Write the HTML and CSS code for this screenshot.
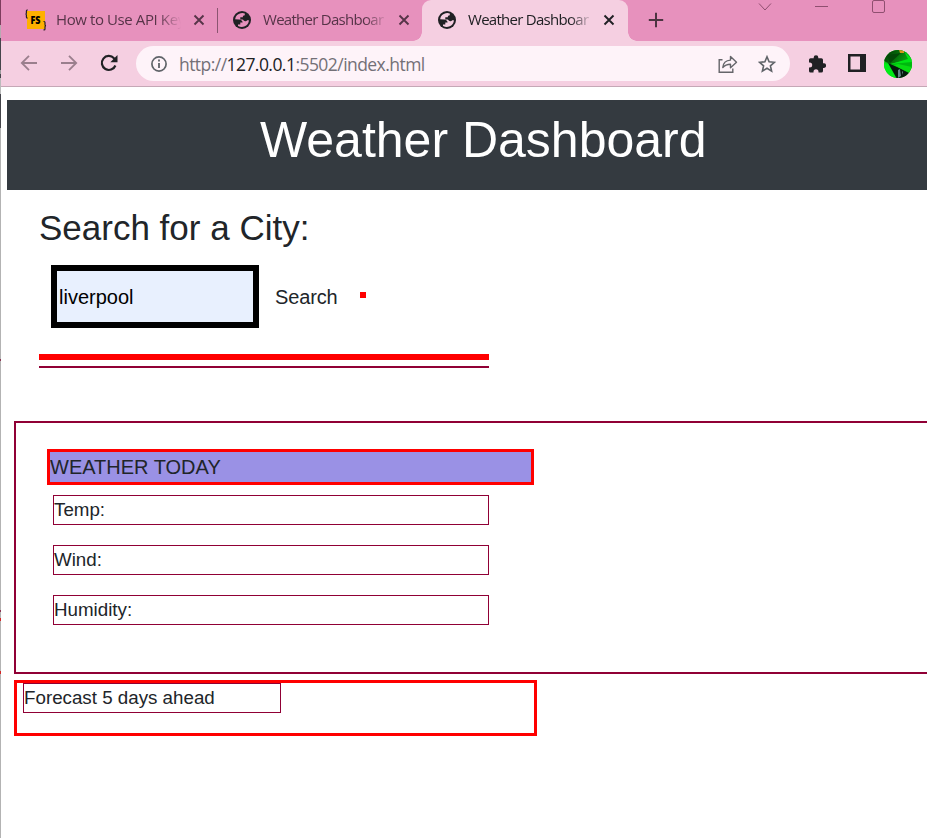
FILE: index.html
```html
<!DOCTYPE html>
<html lang="en">
<head>
<meta charset="utf-8">
<title>Weather Dashboard</title>
<link rel="stylesheet" href="styles.css">
</head>
<body>
<svg class="defs" width="0" height="0" aria-hidden="true">
  <symbol id="globe" viewBox="0 0 18 18">
    <circle cx="9" cy="9" r="9" fill="#202124"/>
    <path fill="var(--land)" d="M9.600 2C7 2 4.300 3.200 2.800 5.700L2.100 8.200l4 .2c2.200.1 3.300 1.200 3.500 3.200H7.300v2H5v1.300c2.600 1.600 5.800 1.400 8.200-.3 1.600-1.200 2.700-3.200 2.700-5.300h-1.700c-.6.900-1.500 1.200-2.600.8-1-.3-1.100-1.400-2.100-1.700H7.300V6.300h2.500c0-1.300.5-1.800 2-2V2.500z"/>
  </symbol>
  <symbol id="close" viewBox="0 0 12 12"><path d="M1.500 1.500l9 9M10.500 1.500l-9 9" stroke="currentColor" stroke-width="1.900"/></symbol>
</svg>
<div class="edge"></div>
<div class="window">
  <div class="tabstrip">
    <div class="tab">
      <svg class="favicon fs" width="22" height="22" viewBox="0 0 22 22"><rect x="2" y="2" width="18" height="18" fill="#ffb000"/><text x="5.400" y="14.500" font-family="Open Sans" font-weight="800" font-size="10" textLength="10" lengthAdjust="spacingAndGlyphs">FS</text><path d="M2.800 1H2Q1.400 1 1.400 2v2Q1.400 5 .5 5q.9 0 .9 1v2q0 1 .6 1h.8M18.500 12.500h.6q.9 0 .9 1v2q0 1 .9 1.200-.9.200-.9 1.200v2q0 1-.9 1h-.6" fill="none" stroke="#2c2025" stroke-width="1.200"/></svg>
      <span class="tab-title">How to Use API Key</span>
      <svg class="x" width="12" height="12"><use href="#close"/></svg>
    </div>
    <div class="tab second">
      <svg class="favicon" width="18" height="18"><use href="#globe"/></svg>
      <span class="tab-title">Weather Dashboar</span>
      <svg class="x" width="12" height="12"><use href="#close"/></svg>
    </div>
    <div class="tab active">
      <svg class="favicon" width="18" height="18"><use href="#globe"/></svg>
      <span class="tab-title">Weather Dashboar</span>
      <svg class="x" width="12" height="12"><use href="#close"/></svg>
    </div>
    <svg class="plus" width="16" height="16" viewBox="0 0 16 16"><path d="M8 .8v14.400M.8 8h14.400" stroke="#4d3441" stroke-width="2"/></svg>
    <svg class="controls" width="130" height="14" viewBox="0 0 130 14"><g fill="none" stroke="#8f4f70"><path d="M1 3.500l6 6.500 6-6.500M57 6.500h13"/><rect x="114.500" y=".5" width="12" height="12" rx="1.500"/></g></svg>
  </div>
  <div class="toolbar">
    <svg class="arrow" width="18" height="16" viewBox="0 0 18 16"><path d="M17 8H2M9 .8 1.800 8 9 15.200" fill="none" stroke="#9a7f8d" stroke-width="1.800"/></svg>
    <svg class="arrow forward" width="18" height="16" viewBox="0 0 18 16"><path d="M1 8h15M9 .8 16.200 8 9 15.200" fill="none" stroke="#9a7f8d" stroke-width="1.800"/></svg>
    <svg class="reload" width="18" height="18" viewBox="0 0 18 18"><path d="M15.400 11.500A7 7 0 1 1 14 4.200l1.500 1.500" fill="none" stroke="#202124" stroke-width="2.200"/><path d="M17.500 1v7.200h-7.200z" fill="#202124"/></svg>
    <div class="omnibox">
      <svg class="info" width="16" height="16" viewBox="0 0 16 16"><circle cx="8" cy="8" r="7.100" fill="none" stroke="#5f6368" stroke-width="1.700"/><path d="M8 3.600v1.900M8 7v5" stroke="#5f6368" stroke-width="1.800"/></svg>
      <span class="url">http://<b>127.0.0.1</b>:5502/index.html</span>
      <svg class="share" width="20" height="18" viewBox="0 0 20 18"><g fill="none" stroke="#65656a" stroke-width="1.400"><path d="M4.500 4.700H1.200v12.500h13.600v-3.700"/><path d="M4.800 12.500c.4-4.800 3.300-7.200 7.700-7.400V1.400l6 5.800-6 5.600V9.200c-3.500 0-5.800 1-7.700 3.300z" stroke-linejoin="round"/></g></svg>
      <svg class="star" width="18" height="18" viewBox="0 0 18 18"><path d="M9 1.800l2.100 5 5.300.5-4 3.500 1.200 5.300L9 13.300l-4.600 2.800 1.200-5.300-4-3.500 5.300-.5z" fill="none" stroke="#5f6368" stroke-width="1.600"/></svg>
    </div>
    <svg class="puzzle" width="18" height="18" viewBox="0 0 18 18"><path fill="#202124" d="M15.800 8.300H15V4.800Q15 3.200 13.400 3.200H10.300V2.500A2.300 2.300 0 0 0 5.700 2.500V3.200H2.600Q1 3.200 1 4.800V7.600H1.700A2.500 2.500 0 0 1 1.700 12.600H1V16Q1 17.500 2.600 17.500H5.500V16.800A2.500 2.500 0 0 1 10.500 16.800V17.500H13.400Q15 17.500 15 16V12.900H15.800A2.300 2.300 0 0 0 15.800 8.300z"/></svg>
    <svg class="panel" width="18" height="18" viewBox="0 0 18 18"><path fill="#202124" fill-rule="evenodd" d="M0 0h18v18H0zM2.500 2.500v13H12v-13z"/></svg>
    <svg class="avatar" width="28" height="28" viewBox="0 0 28 28"><defs><clipPath id="round"><circle cx="14" cy="14" r="14"/></clipPath><linearGradient id="leaf" x1="0" y1="0" x2="1" y2=".4"><stop offset="0" stop-color="#022d04"/><stop offset="1" stop-color="#08a80f"/></linearGradient></defs><g clip-path="url(#round)"><path fill="#08c512" d="M0 0h28v28H0z"/><path fill="url(#leaf)" d="M0 0h24L28 9 6 14 0 11z"/><path fill="#034807" d="M3 5 17 3 6 13z"/><path fill="#00e516" d="M20 1l8 8v6L7 14 24 9z"/><path fill="#00b70f" d="M6 14 28 12v8z"/><path fill="#00ed16" d="M0 13l5 1 10 14H0z"/><path fill="#041b0c" d="M4 13l9 4 12 6-5 6h-7z"/><path fill="#09db12" d="M10 15l16 8 2-6-14-3z"/><path fill="#66878a" d="m14 20 2-1 1 7-3 2zM18 22l1-1v4z"/><path fill="#d49618" d="M15 0h5v3h-4z"/></g></svg>
  </div>
  <main class="page">
    <h1 class="banner">Weather Dashboard</h1>
    <section class="search">
      <h2>Search for a City:</h2>
      <div class="search-row">
        <input type="text" value="liverpool" aria-label="City">
        <span class="search-button">Search</span>
        <span class="marker"></span>
      </div>
      <div class="rule-red"></div>
      <div class="rule-wine"></div>
    </section>
    <section class="today">
      <div class="today-title">WEATHER TODAY</div>
      <div class="reading">Temp:</div>
      <div class="reading">Wind:</div>
      <div class="reading">Humidity:</div>
    </section>
    <section class="forecast"><div class="forecast-title">Forecast 5 days ahead</div></section>
  </main>
</div>
</body>
</html>
```
FILE: styles.css
```css
* { box-sizing: border-box; }
body {
  margin: 0;
  height: 838px;
  display: grid;
  grid-template-columns: 1px 1fr;
  overflow: hidden;
  background: #fff;
  color: #212529;
  font-family: "Liberation Sans", Arial, sans-serif;
}
.defs { position: absolute; }
.edge {
  background: linear-gradient(#7d3c5d 0 25px, #b8a9b1 25px 38px, #45454b 38px 70px, #999 70px 74px, #45454b 74px 78px, #bbb 78px 94px, #45454b 94px 128px, #b3b3b3 128px 359px, #8b3552 359px 361px, #b3b3b3 361px 610px, #8b3552 610px 612px, #b3b3b3 612px 618px, #d32626 618px 621px, #b3b3b3 621px 671px, #d32626 671px 674px, #b3b3b3 674px);
}
.window { min-width: 0; overflow: hidden; }
svg { display: block; flex: none; }

.tabstrip {
  height: 41px;
  display: flex;
  background: #e791bd;
  font: 15px/20px "Open Sans", "Noto Sans", sans-serif;
  color: #573448;
}
.tab {
  width: 217px;
  height: 41px;
  display: flex;
  padding: 0 0 0 24px;
  --land: #e791bd;
}
.tab.second { width: 204px; padding-left: 15px; }
.tab.second::before {
  content: "";
  width: 1px;
  height: 25px;
  margin: 8px 0 0 -16px;
  background: #8b5571;
}
.tab.second .favicon { margin-left: 15px; }
.tab.active {
  width: 206px;
  padding-left: 16px;
  background: #f5cfe1;
  border-radius: 9px 9px 0 0;
  --land: #f5cfe1;
  color: #202124;
  position: relative;
}
.tab.active::before, .tab.active::after {
  content: "";
  position: absolute;
  bottom: 0;
  width: 9px;
  height: 9px;
}
.tab.active::before { left: -9px; background: radial-gradient(circle at 0 0, transparent 8.500px, #f5cfe1 9px); }
.tab.active::after { right: -9px; background: radial-gradient(circle at 100% 0, transparent 8.500px, #f5cfe1 9px); }
.favicon { margin-top: 11px; }
.fs { margin-top: 9px; }
.tab-title {
  width: 125px;
  height: 22px;
  margin: 9px 0 0 12px;
  white-space: nowrap;
  letter-spacing: -0.720px;
  -webkit-mask-image: linear-gradient(90deg, #000 102px, transparent 125px);
  mask-image: linear-gradient(90deg, #000 102px, transparent 125px);
}
.fs + .tab-title { margin-left: 9px; letter-spacing: -0.400px; }
.x { margin: 14px 0 0 10px; }
.fs ~ .x { margin-left: 12px; }
.plus { margin: 12px 0 0 20px; }
.controls { margin: 0 0 0 94px; }

.toolbar {
  height: 46px;
  display: flex;
  align-items: center;
  padding-left: 19px;
  background: #f5cfe1;
  border-bottom: 1px solid #c5a8b6;
}
.arrow { margin-top: -2px; }
.forward { margin-left: 22px; }
.reload { margin: -2px 0 0 22px; }
.omnibox {
  width: 654px;
  height: 35px;
  margin-left: 18px;
  padding-left: 15px;
  display: flex;
  align-items: center;
  border-radius: 18px;
  background: #fef3f9;
}
.url {
  width: 247px;
  margin-left: 12px;
  font: 17.500px/24px "Open Sans", "Noto Sans", sans-serif;
  letter-spacing: -0.550px;
  white-space: nowrap;
  color: #737077;
}
.url b { font-weight: 400; color: #202124; }
.share { margin-left: 292px; }
.star { margin-left: 20px; }
.puzzle { margin-left: 18px; }
.panel { margin: -1px 0 0 22px; }
.avatar { margin-left: 18px; }

.page { padding: 13px 0 0 6px; }
.banner {
  height: 90px;
  margin: 0;
  padding: 10px 0 0 253px;
  background: #343a40;
  color: #fff;
  font-size: 50px;
  font-weight: 400;
  line-height: 60px;
}
.search { width: 482px; padding: 17px 0 0 32px; }
h2 { margin: 0; font-size: 35px; font-weight: 400; line-height: 42px; }
.search-row { display: flex; margin: 16px 0 0 12px; }
input {
  width: 208px;
  height: 63px;
  padding: 3px 2px 1px;
  border: 6px solid #000;
  border-radius: 0;
  background: #e8f0fe;
  color: #000;
  font: 20px "Liberation Sans", Arial, sans-serif;
}
.search-button { width: 62px; margin: 17px 0 0 16px; font-size: 20px; line-height: 30px; letter-spacing: -0.150px; }
.marker { width: 6px; height: 6px; margin: 27px 0 0 23px; background: #f00; }
.rule-red { height: 6px; margin-top: 26px; background: #f00; }
.rule-wine { height: 2px; margin-top: 6px; background: #900035; }
.today {
  height: 253px;
  margin: 53px -3px 0 7px;
  padding: 26px 0 0 31px;
  border: 2px solid #900035;
}
.today-title {
  width: 487px;
  height: 36px;
  margin-bottom: 10px;
  border: 3px solid #f00;
  background: #9a91e5;
  font-size: 20px;
  line-height: 30px;
}
.reading {
  width: 436px;
  height: 30px;
  margin: 0 0 20px 6px;
  border: 1px solid #900035;
  font-size: 18.750px;
  line-height: 28px;
}
.forecast {
  width: 523px;
  height: 56px;
  margin: 6px 0 0 7px;
  padding-left: 6px;
  border: 3px solid #f00;
}
.forecast-title {
  width: 258px;
  height: 30px;
  border: 1px solid #900035;
  font-size: 18.750px;
  line-height: 28px;
}
```
